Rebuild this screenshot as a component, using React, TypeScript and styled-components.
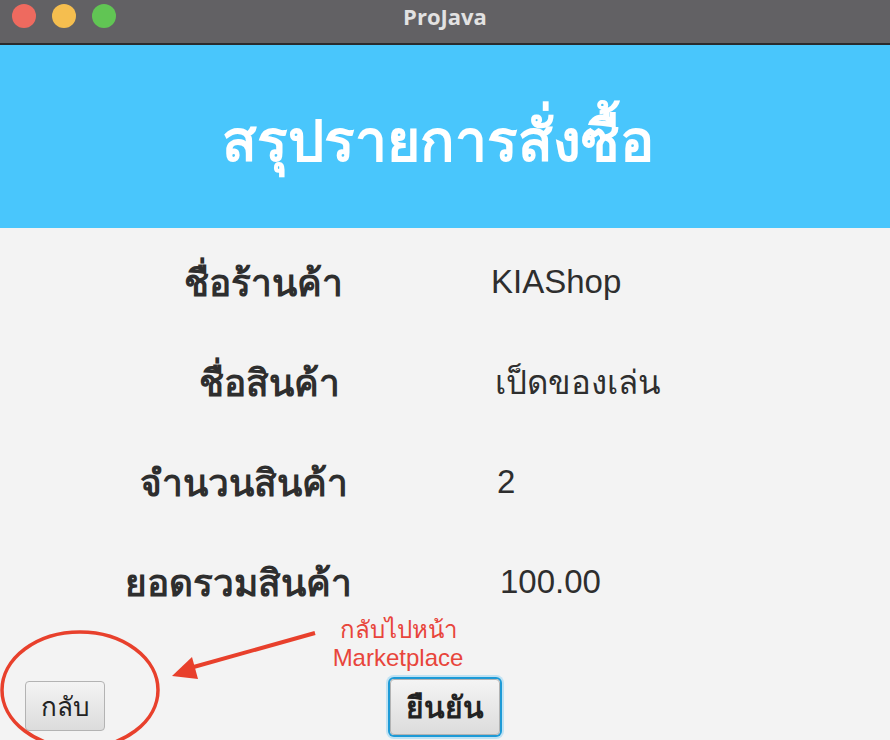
import React from 'react';
import styled, { createGlobalStyle } from 'styled-components';

const Global = createGlobalStyle`
  html, body {
    margin: 0;
    padding: 0;
    background: #f3f3f3;
  }
  body {
    font-family: "Liberation Sans", "Noto Sans", "DejaVu Sans", sans-serif;
  }
`;

const Window = styled.div`
  width: 890px;
  height: 740px;
  display: flex;
  flex-direction: column;
  overflow: hidden;
  background: #f3f3f3;
  position: relative;
`;

const TitleBar = styled.div`
  height: 43px;
  flex: none;
  background: #626164;
  border-bottom: 2px solid #2a2a2c;
  position: relative;
`;

const Lights = styled.div`
  display: flex;
  gap: 16px;
  padding: 4px 0 0 12px;
`;

const Light = styled.span<{ $c: string }>`
  width: 24px;
  height: 24px;
  border-radius: 50%;
  background: ${p => p.$c};
`;

const WinTitle = styled.div`
  position: absolute;
  left: 0;
  right: 0;
  top: 1px;
  text-align: center;
  color: #e2e2e2;
  font-family: "Open Sans", "Liberation Sans", sans-serif;
  font-weight: 700;
  font-size: 22px;
`;

const Header = styled.div`
  height: 183px;
  flex: none;
  background: #49c6fc;
  display: flex;
  align-items: center;
  justify-content: center;
  color: #fff;
  font-size: 57px;
  font-weight: 700;
  padding: 8px 14px 0 0;
  box-sizing: border-box;
`;

const Rows = styled.div`
  display: flex;
  flex-direction: column;
  padding-top: 4px;
`;

const Row = styled.div`
  display: grid;
  grid-template-columns: 490px 1fr;
  height: 100px;
  align-items: center;
`;

const Label = styled.div<{ $cx: number }>`
  font-size: 37px;
  font-weight: 700;
  color: #2e2e2e;
  text-align: center;
  width: 300px;
  margin-left: ${p => p.$cx - 150}px;
  white-space: nowrap;
`;

const Value = styled.div<{ $shift: number }>`
  font-size: 33px;
  color: #2e2e2e;
  padding-left: ${p => p.$shift}px;
`;

const Btn = styled.button<{ $focus?: boolean; $bold?: boolean }>`
  position: absolute;
  font-family: inherit;
  font-weight: ${p => (p.$bold ? 700 : 400)};
  color: #222;
  border-radius: 4px;
  background: linear-gradient(#f4f4f4, #dcdcdc);
  border: 1px solid #b3b3b3;
  box-shadow: ${p => (p.$focus ? '0 0 0 2px #1d9ad6, 0 0 0 4px #bfe2f3' : 'none')};
  padding: 0;
  cursor: pointer;
`;

const Note = styled.div`
  position: absolute;
  left: 308px;
  top: 616px;
  width: 180px;
  text-align: center;
  color: #e8453b;
  font-size: 24px;
  line-height: 28px;
`;

const Overlay = styled.svg`
  position: absolute;
  left: 0;
  top: 0;
  pointer-events: none;
`;

const rows = [
  { label: 'ชื่อร้านค้า', value: 'KIAShop', cx: 263, vs: 1 },
  { label: 'ชื่อสินค้า', value: 'เป็ดของเล่น', cx: 269, vs: 5 },
  { label: 'จำนวนสินค้า', value: '2', cx: 244, vs: 7 },
  { label: 'ยอดรวมสินค้า', value: '100.00', cx: 238, vs: 10 },
];

export default function App() {
  return (
    <Window>
      <Global />
      <TitleBar>
        <Lights>
          <Light $c="#ee6a5f" />
          <Light $c="#f5be4f" />
          <Light $c="#61c554" />
        </Lights>
        <WinTitle>ProJava</WinTitle>
      </TitleBar>
      <Header>สรุปรายการสั่งซื้อ</Header>
      <Rows>
        {rows.map(r => (
          <Row key={r.label}>
            <Label $cx={r.cx}>{r.label}</Label>
            <Value $shift={r.vs}>{r.value}</Value>
          </Row>
        ))}
      </Rows>
      <Btn style={{ left: 25, top: 681, width: 80, height: 50, fontSize: 26 }}>กลับ</Btn>
      <Btn $focus $bold style={{ left: 390, top: 679, width: 110, height: 56, fontSize: 30 }}>ยืนยัน</Btn>
      <Note>
        กลับไปหน้า
        <br />
        Marketplace
      </Note>
      <Overlay width="890" height="740" viewBox="0 0 890 740">
        <ellipse cx="80" cy="690" rx="78" ry="58" fill="none" stroke="#e8402c" strokeWidth="3.5" />
        <line x1="315" y1="633" x2="190" y2="668" stroke="#e8402c" strokeWidth="4" />
        <polygon points="172,676 192,657 198,679" fill="#e8402c" />
      </Overlay>
    </Window>
  );
}
